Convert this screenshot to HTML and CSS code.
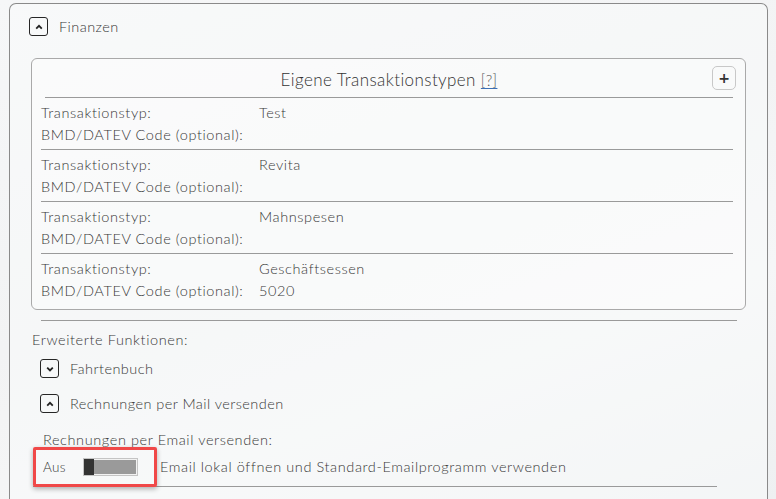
FILE: index.html
```html
<!DOCTYPE html>
<html lang="de">
<head>
<meta charset="utf-8">
<title>Finanzen</title>
<link rel="stylesheet" href="styles.css">
</head>
<body>
<div class="panel">
  <div class="section-head">
    <span class="tgl"><svg width="8" height="6" viewBox="0 0 8 6"><path d="M1.2 4.6 L4 1.8 L6.8 4.6" fill="none" stroke="#222" stroke-width="1.8"/></svg></span>
    <span class="head-label">Finanzen</span>
  </div>

  <div class="types">
    <div class="types-head">
      <span></span>
      <span class="types-title">Eigene Transaktionstypen <span class="help">[?]</span></span>
      <span class="plus">+</span>
    </div>
    <div class="row">
      <div class="lbl">Transaktionstyp:</div><div class="val">Test</div>
      <div class="lbl">BMD/DATEV Code (optional):</div><div class="val"></div>
    </div>
    <div class="row">
      <div class="lbl">Transaktionstyp:</div><div class="val">Revita</div>
      <div class="lbl">BMD/DATEV Code (optional):</div><div class="val"></div>
    </div>
    <div class="row">
      <div class="lbl">Transaktionstyp:</div><div class="val">Mahnspesen</div>
      <div class="lbl">BMD/DATEV Code (optional):</div><div class="val"></div>
    </div>
    <div class="row last">
      <div class="lbl">Transaktionstyp:</div><div class="val">Geschäftsessen</div>
      <div class="lbl">BMD/DATEV Code (optional):</div><div class="val">5020</div>
    </div>
  </div>

  <div class="sep"></div>

  <div class="ext-title">Erweiterte Funktionen:</div>

  <div class="sub-head">
    <span class="tgl"><svg width="8" height="6" viewBox="0 0 8 6"><path d="M1.2 1.6 L4 4.4 L6.8 1.6" fill="none" stroke="#222" stroke-width="1.8"/></svg></span>
    <span class="head-label">Fahrtenbuch</span>
  </div>
  <div class="sub-head">
    <span class="tgl"><svg width="8" height="6" viewBox="0 0 8 6"><path d="M1.2 4.6 L4 1.8 L6.8 4.6" fill="none" stroke="#222" stroke-width="1.8"/></svg></span>
    <span class="head-label">Rechnungen per Mail versenden</span>
  </div>

  <div class="mail">
    <div class="mail-title">Rechnungen per Email versenden:</div>
    <div class="mail-row">
      <div class="switch-wrap">
        <span class="aus">Aus</span>
        <span class="switch"><span class="knob"></span></span>
      </div>
      <span class="mail-text">Email lokal öffnen und Standard-Emailprogramm verwenden</span>
    </div>
  </div>
</div>
</body>
</html>
```

FILE: styles.css
```css
html, body {
  margin: 0;
  padding: 0;
}
body {
  width: 776px;
  height: 499px;
  overflow: hidden;
  background: linear-gradient(160deg, #f6f7f8 0%, #f2f3f4 45%, #f5f6f7 70%, #eef0f1 100%);
  font-family: Lato, "Noto Sans", sans-serif;
  font-weight: 300;
  color: #383838;
  font-size: 14.5px;
  letter-spacing: 0.6px;
}
.panel {
  margin: 3px 0 0 9px;
  width: 757px;
  height: 496px;
  overflow: hidden;
  border: 1px solid #8a8a8a;
  border-bottom: none;
  border-radius: 7px 7px 0 0;
  background: rgba(250, 251, 251, 0.5);
}
.section-head {
  display: flex;
  align-items: center;
  gap: 11px;
  margin: 13px 0 0 19px;
  height: 19px;
}
.tgl {
  box-sizing: border-box;
  width: 19px;
  height: 19px;
  border: 1.3px solid #262626;
  border-radius: 3px;
  display: flex;
  align-items: center;
  justify-content: center;
  flex: none;
}
.head-label {
  font-size: 14.5px;
  letter-spacing: 0.45px;
}
.types {
  margin: 22px 0 0 21px;
  width: 692px;
  border: 1px solid #a9a9a9;
  border-radius: 6px;
  padding: 0 12px 0 9px;
  background: rgba(252, 252, 252, 0.6);
}
.types-head {
  display: grid;
  grid-template-columns: 1fr auto 1fr;
  align-items: center;
  height: 38px;
  border-bottom: 1px solid #9a9a9a;
  margin-left: 4px;
}
.types-title {
  font-size: 17px;
  letter-spacing: 0.4px;
  color: #333;
  padding-top: 2px;
}
.help {
  color: #555;
  text-decoration: underline;
  text-decoration-color: #3b6fb6;
  text-underline-offset: 2px;
  font-size: 15px;
}
.plus {
  justify-self: end;
  box-sizing: border-box;
  width: 24px;
  height: 24px;
  margin-right: -3px;
  border: 1px solid #c8c8c8;
  border-radius: 5px;
  display: flex;
  align-items: center;
  justify-content: center;
  font-weight: 700;
  font-size: 14px;
  color: #333;
  font-family: "DejaVu Sans", sans-serif;
  line-height: 1;
  letter-spacing: 0;
}
.row {
  display: grid;
  grid-template-columns: 218px 1fr;
  line-height: 22px;
  padding: 4px 0 3px;
  border-bottom: 1px solid #9a9a9a;
  white-space: nowrap;
}
.row.last {
  border-bottom: none;
  padding-bottom: 7px;
}
.sep {
  margin: 10px 0 0 31px;
  width: 696px;
  border-top: 1px solid #9a9a9a;
}
.ext-title {
  margin: 8px 0 0 22px;
  line-height: 22px;
}
.sub-head {
  display: flex;
  align-items: center;
  gap: 11px;
  margin: 8px 0 0 30px;
  height: 19px;
}
.sub-head + .sub-head {
  margin-top: 16px;
}
.mail {
  margin: 16px 0 0 23px;
}
.mail-title {
  line-height: 22px;
  margin-left: 10px;
}
.mail-row {
  display: flex;
  align-items: center;
  width: 684px;
  border-bottom: 1px solid #9a9a9a;
  margin-top: -4px;
}
.switch-wrap {
  box-sizing: border-box;
  width: 124px;
  height: 40px;
  border: 3px solid #f04848;
  border-radius: 2px;
  box-shadow: 0 2px 5px rgba(0, 0, 0, 0.3);
  display: flex;
  align-items: center;
  padding-left: 7px;
  margin-bottom: -1px;
  position: relative;
}
.aus {
  font-size: 13.5px;
  width: 40px;
  letter-spacing: 0.3px;
}
.switch {
  box-sizing: border-box;
  width: 55px;
  height: 18px;
  border: 1px solid #c4c4c4;
  background: #9a9a9a;
  box-shadow: inset 0 0 0 1px #f2f2f2;
  display: flex;
}
.knob {
  width: 10px;
  height: 16px;
  background: #333;
}
.mail-text {
  margin-left: 3px;
  line-height: 38px;
}
```
